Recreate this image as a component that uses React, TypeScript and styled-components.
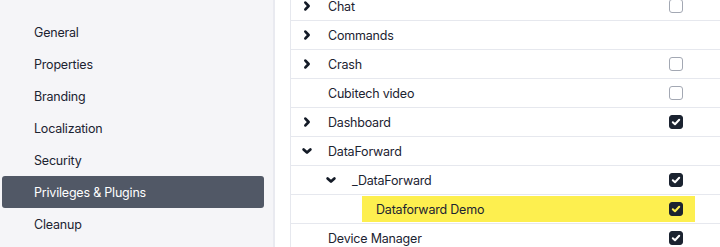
import styled, { createGlobalStyle } from "styled-components";

const GlobalStyle = createGlobalStyle`
  body {
    margin: 0;
    font-family: Inter, "Noto Sans", sans-serif;
    color: #1c2331;
    background: #ffffff;
    overflow: hidden;
  }
`;

const Page = styled.div`
  display: flex;
  height: 247px;
  width: 720px;
  overflow: hidden;
`;

const Sidebar = styled.nav`
  width: 262px;
  flex-shrink: 0;
  background: #f5f5f8;
  border-right: 2px solid #e9eaf0;
  padding: 16px 9px 0 2px;
  display: flex;
  flex-direction: column;
`;

const NavItem = styled.div<{ $active?: boolean }>`
  height: 32px;
  display: flex;
  align-items: center;
  padding-left: 32px;
  font-size: 12.5px;
  letter-spacing: -0.2px;
  border-radius: 3px;
  background: ${(p) => (p.$active ? "#515866" : "transparent")};
  color: ${(p) => (p.$active ? "#ffffff" : "#1c2331")};
`;

const Gutter = styled.div`
  width: 15px;
  flex-shrink: 0;
`;

const Content = styled.div`
  flex: 1;
  border-left: 1px solid #e6e8ee;
  overflow: hidden;
`;

// list is scrolled a bit, first row is partly hidden
const Tree = styled.div`
  margin-top: -8px;
`;

const Row = styled.div<{ $depth: number }>`
  height: 28px;
  display: flex;
  align-items: center;
  border-bottom: 1px solid #e6e8ee;
  padding-left: ${(p) => 9 + p.$depth * 24}px;
  padding-right: 25px;
`;

const ChevronSlot = styled.div`
  width: 14px;
  flex-shrink: 0;
  display: flex;
  justify-content: center;
  align-items: center;
`;

const Label = styled.div<{ $highlight?: boolean }>`
  flex: 1;
  height: 26px;
  display: flex;
  align-items: center;
  padding: 0 12px 0 14px;
  font-size: 12.5px;
  letter-spacing: -0.2px;
  background: ${(p) => (p.$highlight ? "#fdef4f" : "transparent")};
`;

const Name = styled.span`
  flex: 1;
`;

const Box = styled.div<{ $checked?: boolean }>`
  width: 14px;
  height: 14px;
  box-sizing: border-box;
  border-radius: 3px;
  border: 1px solid ${(p) => (p.$checked ? "#1b2330" : "#a3a8b3")};
  background: ${(p) => (p.$checked ? "#1b2330" : "#ffffff")};
  display: flex;
  align-items: center;
  justify-content: center;
`;

function Chevron({ open }: { open?: boolean }) {
  return (
    <svg width="12" height="12" viewBox="0 0 12 12">
      <path
        d={open ? "M2.6 4.4 L6 7.6 L9.4 4.4" : "M4.4 2.6 L7.6 6 L4.4 9.4"}
        fill="none"
        stroke="#141b27"
        strokeWidth="2.7"
        strokeLinecap="round"
        strokeLinejoin="round"
      />
    </svg>
  );
}

function Checkbox({ checked, tick }: { checked?: boolean; tick: string }) {
  return (
    <Box $checked={checked}>
      {checked && (
        <svg width="10" height="10" viewBox="0 0 10 10">
          <path
            d="M1.8 5.2 L4 7.3 L8.2 2.8"
            fill="none"
            stroke={tick}
            strokeWidth="2"
            strokeLinecap="round"
            strokeLinejoin="round"
          />
        </svg>
      )}
    </Box>
  );
}

interface INode {
  name: string;
  depth: number;
  chevron?: "open" | "closed";
  checkbox?: "on" | "off";
  highlight?: boolean;
}

const nav = [
  "General",
  "Properties",
  "Branding",
  "Localization",
  "Security",
  "Privileges & Plugins",
  "Cleanup",
];

const nodes: INode[] = [
  { name: "Chat", depth: 0, chevron: "closed", checkbox: "off" },
  { name: "Commands", depth: 0, chevron: "closed" },
  { name: "Crash", depth: 0, chevron: "closed", checkbox: "off" },
  { name: "Cubitech video", depth: 0, checkbox: "off" },
  { name: "Dashboard", depth: 0, chevron: "closed", checkbox: "on" },
  { name: "DataForward", depth: 0, chevron: "open" },
  { name: "_DataForward", depth: 1, chevron: "open", checkbox: "on" },
  { name: "Dataforward Demo", depth: 2, checkbox: "on", highlight: true },
  { name: "Device Manager", depth: 0, checkbox: "on" },
];

export default function App() {
  return (
    <Page>
      <GlobalStyle />
      <Sidebar>
        {nav.map((item) => (
          <NavItem key={item} $active={item === "Privileges & Plugins"}>
            {item}
          </NavItem>
        ))}
      </Sidebar>
      <Gutter />
      <Content>
        <Tree>
          {nodes.map((n) => (
            <Row key={n.name} $depth={n.depth}>
              <ChevronSlot>
                {n.chevron && <Chevron open={n.chevron === "open"} />}
              </ChevronSlot>
              <Label $highlight={n.highlight}>
                <Name>{n.name}</Name>
                {n.checkbox && (
                  <Checkbox
                    checked={n.checkbox === "on"}
                    tick={n.highlight ? "#fdef4f" : "#ffffff"}
                  />
                )}
              </Label>
            </Row>
          ))}
        </Tree>
      </Content>
    </Page>
  );
}
